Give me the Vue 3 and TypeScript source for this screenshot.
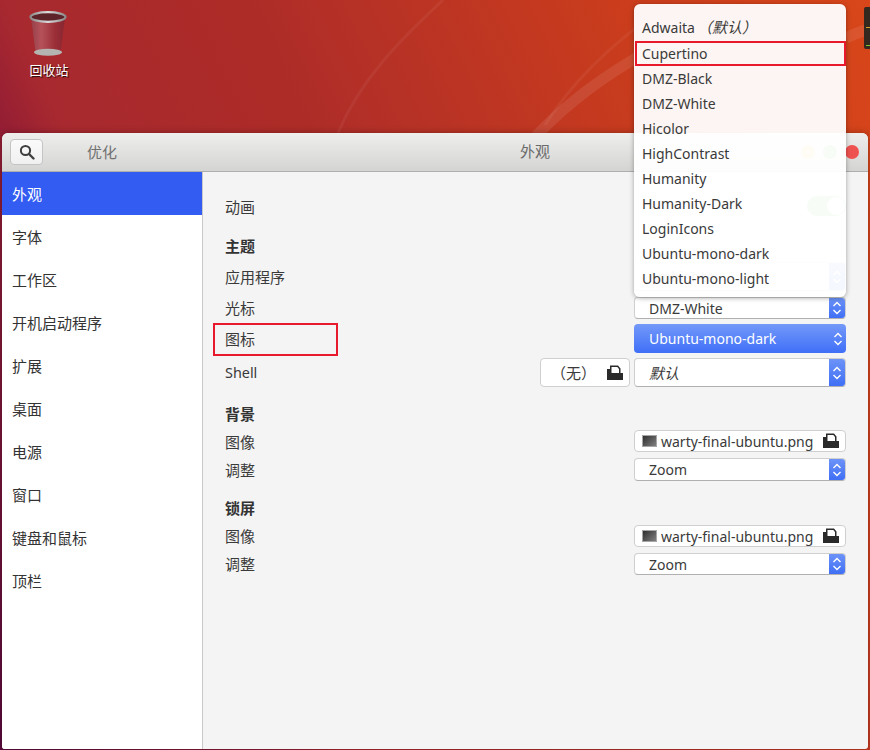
<script setup lang="ts">
const sidebar = ['外观', '字体', '工作区', '开机启动程序', '扩展', '桌面', '电源', '窗口', '键盘和鼠标', '顶栏']
const themes = ['Cupertino', 'DMZ-Black', 'DMZ-White', 'Hicolor', 'HighContrast', 'Humanity', 'Humanity-Dark', 'LoginIcons', 'Ubuntu-mono-dark', 'Ubuntu-mono-light']
</script>

<template>
  <div class="desktop">
    <svg class="wallpaper" width="870" height="750" viewBox="0 0 870 750">
      <path d="M443 0 C400 40 360 80 338 133" />
      <path d="M660 10 C610 45 570 85 545 125" />
      <path class="wide" d="M536 136 C570 100 610 72 650 50" />
      <path class="wide" d="M846 38 C852 35 862 31 872 28" />
    </svg>

    <div class="trash">
      <svg width="44" height="48" viewBox="0 0 44 48">
        <defs>
          <linearGradient id="can" x1="0" x2="1" y1="0" y2="0">
            <stop offset="0" stop-color="#96404a" />
            <stop offset=".3" stop-color="#b5525a" />
            <stop offset=".7" stop-color="#9c2f38" />
            <stop offset="1" stop-color="#862630" />
          </linearGradient>
          <linearGradient id="rim" x1="0" x2="1" y1="0" y2="0">
            <stop offset="0" stop-color="#8c8c8c" />
            <stop offset=".5" stop-color="#dcdcdc" />
            <stop offset="1" stop-color="#8a8a8a" />
          </linearGradient>
        </defs>
        <path d="M5 8 L9.5 43 Q22 48 34.5 43 L39 8 Z" fill="url(#can)" />
        <ellipse cx="22" cy="43.3" rx="14" ry="3.5" fill="#b4b4b0" />
        <ellipse cx="22" cy="8" rx="17.5" ry="4.8" fill="#5d2328" stroke="url(#rim)" stroke-width="2.2" />
      </svg>
      <span>回收站</span>
    </div>

    <section class="window">
      <header class="titlebar">
        <button class="search" aria-label="搜索">
          <svg width="16" height="16" viewBox="0 0 16 16">
            <circle cx="6.5" cy="6.5" r="4.6" fill="none" stroke="#3f3f3f" stroke-width="2" />
            <path d="M10 10 L14.5 14.5" stroke="#3f3f3f" stroke-width="2.4" stroke-linecap="round" />
          </svg>
        </button>
        <span class="app-title">优化</span>
        <span class="page-title">外观</span>
        <div class="controls">
          <i class="dot min"></i>
          <i class="dot max"></i>
          <i class="dot close"></i>
        </div>
      </header>

      <div class="body">
        <nav class="sidebar">
          <div v-for="(item, i) in sidebar" :key="item" class="nav-item" :class="{ active: i === 0 }">{{ item }}</div>
        </nav>

        <main class="content">
          <div class="row r-anim">
            <span class="cap low">动画</span>
            <div class="switch"><i></i></div>
          </div>

          <h3 class="head h-theme">主题</h3>
          <div class="row r-app">
            <span class="cap">应用程序</span>
            <div class="combo tall"><span class="label">Ambiance</span><b class="arrows"><svg width="10" height="16" viewBox="0 0 10 16"><path d="M1.5 6 L5 2.5 L8.5 6 M1.5 10 L5 13.5 L8.5 10" /></svg></b></div>
          </div>
          <div class="row r-cursor">
            <span class="cap">光标</span>
            <div class="combo h22"><span class="label">DMZ-White</span><b class="arrows"><svg width="10" height="16" viewBox="0 0 10 16"><path d="M1.5 6 L5 2.5 L8.5 6 M1.5 10 L5 13.5 L8.5 10" /></svg></b></div>
          </div>
          <div class="row r-icon">
            <span class="cap boxed">图标</span>
            <div class="combo open"><span class="label">Ubuntu-mono-dark</span><b class="arrows"><svg width="10" height="16" viewBox="0 0 10 16"><path d="M1.5 6 L5 2.5 L8.5 6 M1.5 10 L5 13.5 L8.5 10" /></svg></b></div>
          </div>
          <div class="row r-shell">
            <span>Shell</span>
            <div class="pair">
              <div class="file none">
                <span class="none-label">（无）</span>
                <svg class="fileicon" width="16" height="16" viewBox="0 0 16 16"><path d="M0 15 V4 H3 V0.5 H11 L13.5 3.5 V8 H16 V15 Z M4.5 8 H12 V4 L10.3 2 H4.5 Z" fill-rule="evenodd" /></svg>
              </div>
              <div class="combo tall"><span class="label italic cjk">默认</span><b class="arrows"><svg width="10" height="16" viewBox="0 0 10 16"><path d="M1.5 6 L5 2.5 L8.5 6 M1.5 10 L5 13.5 L8.5 10" /></svg></b></div>
            </div>
          </div>

          <h3 class="head h-bg">背景</h3>
          <div class="row r-img">
            <span class="cap low">图像</span>
            <div class="file wide">
              <i class="thumb"></i><span>warty-final-ubuntu.png</span>
              <svg class="fileicon" width="16" height="16" viewBox="0 0 16 16"><path d="M0 15 V4 H3 V0.5 H11 L13.5 3.5 V8 H16 V15 Z M4.5 8 H12 V4 L10.3 2 H4.5 Z" fill-rule="evenodd" /></svg>
            </div>
          </div>
          <div class="row r-adj">
            <span class="cap">调整</span>
            <div class="combo h23"><span class="label">Zoom</span><b class="arrows"><svg width="10" height="16" viewBox="0 0 10 16"><path d="M1.5 6 L5 2.5 L8.5 6 M1.5 10 L5 13.5 L8.5 10" /></svg></b></div>
          </div>

          <h3 class="head h-lock">锁屏</h3>
          <div class="row r-img2">
            <span class="cap">图像</span>
            <div class="file wide">
              <i class="thumb"></i><span>warty-final-ubuntu.png</span>
              <svg class="fileicon" width="16" height="16" viewBox="0 0 16 16"><path d="M0 15 V4 H3 V0.5 H11 L13.5 3.5 V8 H16 V15 Z M4.5 8 H12 V4 L10.3 2 H4.5 Z" fill-rule="evenodd" /></svg>
            </div>
          </div>
          <div class="row r-adj2">
            <span class="cap">调整</span>
            <div class="combo h22"><span class="label">Zoom</span><b class="arrows"><svg width="10" height="16" viewBox="0 0 10 16"><path d="M1.5 6 L5 2.5 L8.5 6 M1.5 10 L5 13.5 L8.5 10" /></svg></b></div>
          </div>
        </main>
      </div>
    </section>

    <div class="menu">
      <div class="menu-item first">Adwaita<em>（默认）</em></div>
      <div v-for="(t, i) in themes" :key="t" class="menu-item" :class="{ marked: i === 0 }">{{ t }}</div>
    </div>

    <div class="tray"><i class="led a"></i><i class="led b"></i></div>
  </div>
</template>

<style>
html, body { margin: 0; padding: 0; }
</style>

<style scoped>
.desktop {
  position: relative;
  width: 870px;
  height: 750px;
  overflow: hidden;
  font-family: "Noto Sans", "Noto Sans CJK SC", sans-serif;
  font-size: 14px;
  color: #3a3a3a;
  background: linear-gradient(65deg, #5a0a3c 0%, #951e34 24%, #a8292f 29%, #ad2c27 49%, #b22f28 53%, #cb3d1c 80%, #d8461a 100%);
}
.wallpaper { position: absolute; left: 0; top: 0; }
.wallpaper path { fill: none; stroke: rgba(255, 255, 255, .05); stroke-width: 3; }
.wallpaper path.wide { stroke: rgba(255, 255, 255, .09); stroke-width: 11; }

.trash {
  position: absolute;
  left: 19px;
  top: 9px;
  width: 60px;
  display: flex;
  flex-direction: column;
  align-items: center;
  color: #fff;
  font-size: 13px;
  line-height: 20px;
  text-shadow: 1px 1px 1px rgba(0, 0, 0, .8);
}
.trash svg { margin-bottom: 3px; margin-left: -2px; }

.window {
  position: absolute;
  z-index: 1;
  left: 2px;
  top: 133px;
  width: 866px;
  height: 616px;
  display: flex;
  flex-direction: column;
  border-radius: 6px 6px 3px 3px;
  overflow: hidden;
  background: #f4f4f4;
  box-shadow: 0 0 7px rgba(0, 0, 0, .3);
}
.titlebar {
  position: relative;
  flex: 0 0 39px;
  box-sizing: border-box;
  display: flex;
  align-items: center;
  padding: 0 9px 0 8px;
  background: linear-gradient(#eeeeec, #d4d4d2);
  border-bottom: 1px solid #aeaeae;
}
.search {
  width: 33px;
  height: 26px;
  padding: 0;
  display: flex;
  align-items: center;
  justify-content: center;
  border: 1px solid #c4c4c4;
  border-radius: 4px;
  background: linear-gradient(#fafafa, #f0f0f0);
}
.app-title { margin: 0 0 2px 44px; color: #707070; font-size: 15px; }
.page-title {
  position: absolute;
  left: 518px;
  top: 7px;
  color: #6a6a6a;
  font-size: 15px;
}
.controls {
  margin-left: auto;
  display: flex;
  gap: 8px;
  align-items: center;
}
.dot { display: block; width: 14px; height: 14px; border-radius: 50%; }
.dot.min { background: #f2c23c; }
.dot.max { background: #62c554; }
.dot.close { background: #ef5350; }

.body { flex: 1; display: flex; min-height: 0; }
.sidebar {
  flex: 0 0 200px;
  background: #fff;
  border-right: 1px solid #c9c9c9;
  color: #333;
}
.nav-item {
  box-sizing: border-box;
  height: 43px;
  line-height: 41px;
  padding: 2px 0 0 10px;
  font-size: 15px;
}
.nav-item.active { background: #325cf2; color: #fff; }

.content {
  flex: 1;
  box-sizing: border-box;
  padding: 0 22px;
  display: flex;
  flex-direction: column;
}
.row {
  display: flex;
  justify-content: space-between;
  align-items: center;
}
.row > span { line-height: 20px; font-size: 14.4px; }
.row > span.cap { font-size: 15px; }
.row > span.low { padding-top: 2px; }
.boxed { position: relative; }
.boxed::after {
  content: "";
  position: absolute;
  left: -12px;
  top: -6px;
  width: 125px;
  height: 33px;
  box-sizing: border-box;
  border: 2px solid #e8192c;
}
.head {
  margin: 0;
  font-size: 15px;
  font-weight: 700;
  line-height: 20px;
  color: #333;
}
.r-anim { height: 20px; margin-top: 24px; }
.h-theme { margin-top: 20px; }
.r-app { height: 29px; margin-top: 6px; }
.r-cursor { height: 22px; margin-top: 6px; }
.r-icon { height: 29px; margin-top: 5px; }
.r-shell { height: 29px; margin-top: 5px; }
.h-bg { margin-top: 17px; }
.r-img { height: 22px; margin-top: 6px; }
.r-adj { height: 23px; margin-top: 6px; }
.h-lock { margin-top: 17px; }
.r-img2 { height: 22px; margin-top: 7px; }
.r-adj2 { height: 22px; margin-top: 6px; }

.switch {
  width: 39px;
  height: 20px;
  border-radius: 10px;
  background: #5fc45f;
  position: relative;
}
.switch i {
  position: absolute;
  right: 1px;
  top: 1px;
  width: 18px;
  height: 18px;
  border-radius: 50%;
  background: #fff;
}

.pair { display: flex; gap: 4px; }
.combo {
  box-sizing: border-box;
  width: 212px;
  display: flex;
  align-items: stretch;
  justify-content: space-between;
  background: #fff;
  border: 1px solid #cfcfcf;
  border-bottom-color: #b0b0b0;
  border-radius: 4px;
  overflow: hidden;
}
.h22 { height: 22px; }
.h23 { height: 23px; }
.tall { height: 29px; }
.combo .label { padding-left: 14px; align-self: center; color: #3a3a3a; }
.combo .label.italic { font-style: italic; }
.cjk { font-size: 15px; }
.arrows {
  flex: 0 0 16px;
  display: flex;
  align-items: center;
  justify-content: center;
  background: linear-gradient(#6d93f8, #3f6ff5);
}
.arrows svg path { fill: none; stroke: #fff; stroke-width: 1.4; }
.combo.open {
  height: 29px;
  border: 0;
  background: linear-gradient(#7499f9, #3f6ff8);
}
.combo.open .label { color: #fff; padding-left: 15px; }
.combo.open .arrows { background: none; flex-basis: 17px; }

.file {
  box-sizing: border-box;
  display: flex;
  align-items: center;
  background: #fff;
  border: 1px solid #cfcfcf;
  border-radius: 4px;
  color: #3a3a3a;
}
.none { width: 90px; height: 29px; padding: 0 6px 0 10px; justify-content: space-between; }
.none-label { font-size: 15px; }
.wide { width: 212px; height: 22px; padding: 0 6px 0 7px; }
.fileicon { margin-left: auto; fill: #2a2a2a; flex: none; }
.thumb {
  flex: none;
  width: 13px;
  height: 10px;
  margin-right: 4px;
  border: 1px solid #a6a6a6;
  background: linear-gradient(135deg, #2f2f2f, #808080);
}

.menu {
  position: absolute;
  z-index: 2;
  left: 634px;
  top: 4px;
  width: 212px;
  height: 293px;
  box-sizing: border-box;
  padding-top: 10px;
  border-radius: 6px;
  background: rgba(255, 255, 255, .95);
  box-shadow: 0 1px 5px rgba(0, 0, 0, .35);
  color: #3a3a3a;
}
.menu-item {
  box-sizing: border-box;
  height: 25px;
  line-height: 25px;
  padding-left: 8px;
}
.menu-item.first { height: 27px; line-height: 27px; }
.menu-item em { font-style: italic; font-size: 15px; margin-left: 2px; }
.marked {
  margin-left: 1px;
  padding-left: 7px;
  box-shadow: inset 0 0 0 2px #e8192c;
}

.tray {
  position: absolute;
  left: 864px;
  top: 7px;
  width: 6px;
  height: 42px;
  background: #35291f;
  border-radius: 2px 0 0 2px;
}
.led { position: absolute; left: 2px; width: 4px; height: 1px; }
.led.a { top: 20px; background: #d9a02c; }
.led.b { top: 38px; background: #7fc832; }
</style>
